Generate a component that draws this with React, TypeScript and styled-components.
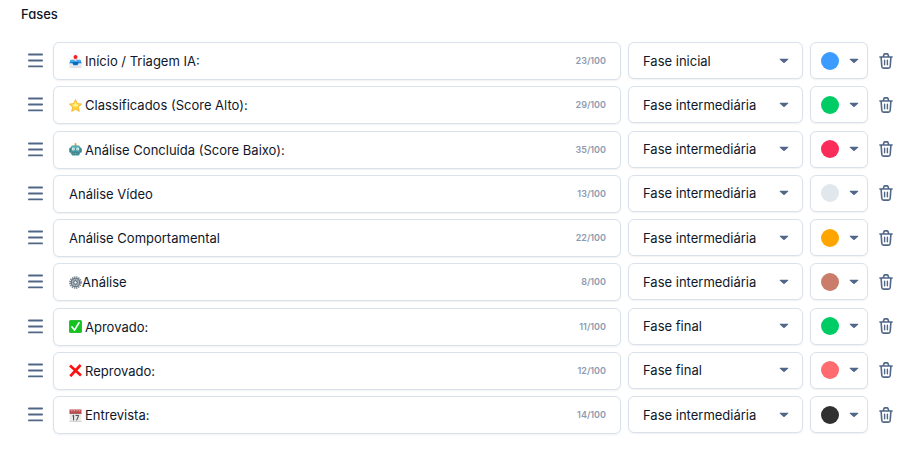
import React, { useState } from "react";
import styled, { createGlobalStyle } from "styled-components";

const GlobalStyle = createGlobalStyle`
  *, *::before, *::after { box-sizing: border-box; }
  body {
    margin: 0;
    background: #ffffff;
    color: #0f172a;
    font-family: Inter, "Liberation Sans", sans-serif;
  }
`;

const line = "#d9e2ec";
const slate = "#506788";

const Page = styled.main`
  display: flex;
  flex-direction: column;
  min-height: 100vh;
  padding: 6px 31px 18px 21px;
`;

const Title = styled.h2`
  margin: 0 0 20px;
  font-size: 13px;
  line-height: 16px;
  font-weight: 500;
  font-feature-settings: "cv11";
`;

const PhaseList = styled.ul`
  display: flex;
  flex: 1;
  flex-direction: column;
  justify-content: space-between;
  margin: 0;
  padding: 0;
  list-style: none;
`;

const PhaseRow = styled.li`
  display: grid;
  grid-template-columns: 25px minmax(0, 1fr) 175px 58px 18px;
  align-items: start;
  column-gap: 7px;
`;

const IconButton = styled.button`
  display: flex;
  align-items: center;
  justify-content: flex-end;
  height: 37px;
  padding: 0;
  border: 0;
  background: none;
  color: ${slate};
  cursor: pointer;
`;

const Handle = styled(IconButton)`
  justify-content: flex-start;
  padding-left: 7px;
  cursor: grab;
`;

const Box = styled.div`
  display: flex;
  align-items: center;
  height: 37px;
  border: 1px solid ${line};
  border-radius: 6px;
  background: #ffffff;
  box-shadow: 0 1px 2px rgba(15, 23, 42, 0.06);
`;

const NameField = styled(Box)<{ $gap: number }>`
  gap: ${(p) => p.$gap}px;
  height: 38px;
  padding: 0 14px 0 15px;
`;

const NameInput = styled.input`
  flex: 1;
  min-width: 0;
  height: 100%;
  padding: 0;
  border: 0;
  outline: 0;
  background: none;
  color: inherit;
  font: 400 13px/18px Inter, "Liberation Sans", sans-serif;
`;

const Counter = styled.span`
  color: #8c9bb1;
  font-size: 9px;
  line-height: 14px;
  font-weight: 600;
`;

const SelectBox = styled(Box)`
  display: grid;
  grid-template-columns: minmax(0, 1fr);
  grid-template-rows: 35px;
  align-items: center;
`;

const TypeSelect = styled.select`
  grid-area: 1 / 1;
  width: 100%;
  height: 35px;
  padding: 0 32px 0 14px;
  border: 0;
  outline: 0;
  appearance: none;
  background: none;
  color: inherit;
  font: 400 13px/18px Inter, "Liberation Sans", sans-serif;
`;

const SelectCaret = styled.span`
  display: flex;
  grid-area: 1 / 1;
  justify-self: end;
  margin-right: 13px;
  pointer-events: none;
`;

const ColorButton = styled(Box).attrs({ as: "button" })`
  justify-content: space-between;
  padding: 0 8px 0 10px;
  cursor: pointer;
`;

const Swatch = styled.span<{ $color: string }>`
  width: 18px;
  height: 18px;
  border-radius: 50%;
  background: ${(p) => p.$color};
`;

const Glyph = styled.svg`
  display: block;
  flex: none;
`;

const MenuIcon = () => (
  <Glyph width="15" height="15" viewBox="0 0 15 15" fill="none" stroke="currentColor" strokeWidth="1.8" strokeLinecap="round" aria-hidden="true">
    <path d="M.9 1.5h13.2M.9 7.5h13.2M.9 13.4h13.2" />
  </Glyph>
);

const Caret = () => (
  <Glyph width="10" height="6" viewBox="0 0 10 6" aria-hidden="true">
    <path d="M1.2.8h7.6c.5 0 .7.5.4.8L5.6 4.8a.9.9 0 0 1-1.2 0L.8 1.6C.5 1.3.7.8 1.2.8z" fill={slate} />
  </Glyph>
);

const TrashIcon = () => (
  <Glyph width="14" height="16" viewBox="0 0 14 16" fill="none" stroke="currentColor" strokeWidth="1.6" strokeLinecap="round" strokeLinejoin="round" aria-hidden="true">
    <path d="M.9 4h12.2M4.2 4l.7-2.300c.2-.5.5-.8 1-.8h2.200c.5 0 .8.3 1 .8l.7 2.300M2.100 4l.7 9.500c.1 1 .7 1.600 1.700 1.600h5c1 0 1.600-.6 1.700-1.600l.7-9.500" />
    <path d="M5.600 7.200v4.500M8.400 7.200v4.500" strokeWidth="1.400" />
  </Glyph>
);

type EmojiName = "inbox" | "star" | "robot" | "gear" | "check" | "cross" | "calendar";

const emojiArt: Record<EmojiName, React.ReactNode> = {
  inbox: (
    <>
      <path d="M1.800 5.500h9.400l1.500 2.700v3.500c0 .7-.4 1-1 1H1.300c-.6 0-1-.3-1-1V8.200z" fill="#e7e9ec" />
      <path d="M1.800 4.800h9.400l1.500 3.400H9.600l-1 2H4.400l-1-2H.300z" fill="#1687d9" />
      <path d="M3.400 7h6.200l-1.500 2.700H4.900z" fill="#0966b8" />
      <path d="M1.300 5.200h10.400v1.600H1.300z" fill="#41b3f2" />
      <path d="M5.300 3h2.400v1.600h1.100L6.500 6.200 4.200 4.600h1.100z" fill="#f7c4c4" />
      <circle cx="6.500" cy="2" r="2" fill="#f32222" />
      <path d="M1 12.200h11" stroke="#cdd1d7" strokeWidth=".6" />
    </>
  ),
  star: (
    <>
      <path d="M6.500.6l1.800 4 4.300.5-3.200 3 .9 4.300-3.800-2.200-3.800 2.200.9-4.300-3.200-3 4.300-.5z" fill="#ffd633" stroke="#f2ae24" strokeWidth=".8" strokeLinejoin="round" />
      <path d="M6.500 2.500l1.100 2.900 2.700.3-3.800 2.200-3.800-2.200 2.700-.3z" fill="#fff19a" />
    </>
  ),
  robot: (
    <>
      <path d="M6.500 1v2" stroke="#d09137" strokeWidth="1.400" />
      <circle cx="6.500" cy="1.100" r="1" fill="#f5a11b" />
      <rect x=".3" y="5" width="2" height="4.500" rx=".8" fill="#376f7b" />
      <rect x="10.700" y="5" width="2" height="4.500" rx=".8" fill="#376f7b" />
      <path d="M3 2.500h7l1.600 2v5L9.900 12.500H3.100L1.400 9.500v-5z" fill="#4398a0" />
      <path d="M2.500 3.500h8v1h-8z" fill="#75c8c7" />
      <circle cx="4.300" cy="6" r="1.500" fill="#e5ffff" />
      <circle cx="8.700" cy="6" r="1.500" fill="#e5ffff" />
      <circle cx="4.300" cy="6" r=".6" fill="#ce5348" />
      <circle cx="8.700" cy="6" r=".6" fill="#ce5348" />
      <path d="M3.700 9.500h5.600v1.700H3.700z" fill="#285b68" />
      <path d="M4.300 10.300h4.400" stroke="#d7eeee" strokeWidth=".8" strokeDasharray="1 .6" />
    </>
  ),
  gear: (
    <>
      <circle cx="6.500" cy="6.500" r="5.500" fill="none" stroke="#75828e" strokeWidth="1.600" strokeDasharray="1.400 .76" />
      <circle cx="6.500" cy="6.500" r="4.200" fill="#b6c0c8" stroke="#687683" strokeWidth="1.300" />
      <path d="M6.500 2.500v8M2.500 6.500h8M3.700 3.700l5.600 5.600M9.300 3.700L3.700 9.300" stroke="#84919c" strokeWidth=".7" />
      <circle cx="6.500" cy="6.500" r="1.800" fill="#e6eaed" stroke="#53606d" strokeWidth="1" />
    </>
  ),
  check: (
    <>
      <rect x=".3" y=".3" width="12.400" height="12.400" rx="1.500" fill="#13c421" stroke="#0da51b" strokeWidth=".6" />
      <path d="M3 6.900l2.500 3.200L10 2.800" fill="none" stroke="#ffffff" strokeWidth="1.700" strokeLinecap="round" strokeLinejoin="round" />
    </>
  ),
  cross: <path d="M1 1.600l11 10M11.600 1L1.300 12.200" fill="none" stroke="#fb1313" strokeWidth="2.700" />,
  calendar: (
    <>
      <path d="M.7.800h11.600v11.800H.700z" fill="#e9e9e9" />
      <path d="M.5.500h12v4H.500z" fill="#bd4b4d" />
      <path d="M2 1.800h1.500M4.500 1.800H6M7.200 1.800h1.500M9.800 1.800h1.500" stroke="#f2c5c4" strokeWidth=".8" />
      <path d="M.5 4.500h12" stroke="#8e3537" strokeWidth=".6" />
      <path d="M3.400 7l1.200-.8v5.200M6.500 6.400h3.200L7.600 11.400" fill="none" stroke="#454545" strokeWidth="1" />
      <path d="M.5 12.600h12" stroke="#b8b8b8" strokeWidth=".6" />
    </>
  ),
};

const Emoji = ({ name }: { name: EmojiName }) => (
  <Glyph width="13" height="13" viewBox="0 0 13 13" aria-hidden="true">
    {emojiArt[name]}
  </Glyph>
);

interface Phase {
  name: string;
  emoji?: EmojiName;
  tight?: boolean;
  count: number;
  type: string;
  color: string;
}

const types = ["Fase inicial", "Fase intermediária", "Fase final"];

const phases: Phase[] = [
  { name: "Início / Triagem IA:", emoji: "inbox", count: 23, type: types[0], color: "#3b9bff" },
  { name: "Classificados (Score Alto):", emoji: "star", count: 29, type: types[1], color: "#00cc66" },
  { name: "Análise Concluída (Score Baixo):", emoji: "robot", count: 35, type: types[1], color: "#fa2d5a" },
  { name: "Análise Vídeo", count: 13, type: types[1], color: "#e1e8ed" },
  { name: "Análise Comportamental", count: 22, type: types[1], color: "#ffa500" },
  { name: "Análise", emoji: "gear", tight: true, count: 8, type: types[1], color: "#c97d6a" },
  { name: "Aprovado:", emoji: "check", count: 11, type: types[2], color: "#00cc66" },
  { name: "Reprovado:", emoji: "cross", count: 12, type: types[2], color: "#ff6b6f" },
  { name: "Entrevista:", emoji: "calendar", count: 14, type: types[1], color: "#303030" },
];

const PhaseItem = ({ phase }: { phase: Phase }) => {
  const [name, setName] = useState(phase.name);
  const [type, setType] = useState(phase.type);
  const count = phase.count + name.length - phase.name.length;

  return (
    <PhaseRow>
      <Handle type="button" aria-label={`Mover ${phase.name}`}>
        <MenuIcon />
      </Handle>
      <NameField $gap={phase.tight ? 0 : 3}>
        {phase.emoji && <Emoji name={phase.emoji} />}
        <NameInput aria-label="Nome da fase" value={name} onChange={(e) => setName(e.target.value)} />
        <Counter>{count}/100</Counter>
      </NameField>
      <SelectBox>
        <TypeSelect aria-label="Tipo de fase" value={type} onChange={(e) => setType(e.target.value)}>
          {types.map((t) => (
            <option key={t}>{t}</option>
          ))}
        </TypeSelect>
        <SelectCaret>
          <Caret />
        </SelectCaret>
      </SelectBox>
      <ColorButton aria-label="Cor da fase">
        <Swatch $color={phase.color} />
        <Caret />
      </ColorButton>
      <IconButton type="button" aria-label={`Excluir ${phase.name}`}>
        <TrashIcon />
      </IconButton>
    </PhaseRow>
  );
};

export default function App() {
  return (
    <>
      <GlobalStyle />
      <Page>
        <Title>Fases</Title>
        <PhaseList>
          {phases.map((phase) => (
            <PhaseItem key={phase.name} phase={phase} />
          ))}
        </PhaseList>
      </Page>
    </>
  );
}
